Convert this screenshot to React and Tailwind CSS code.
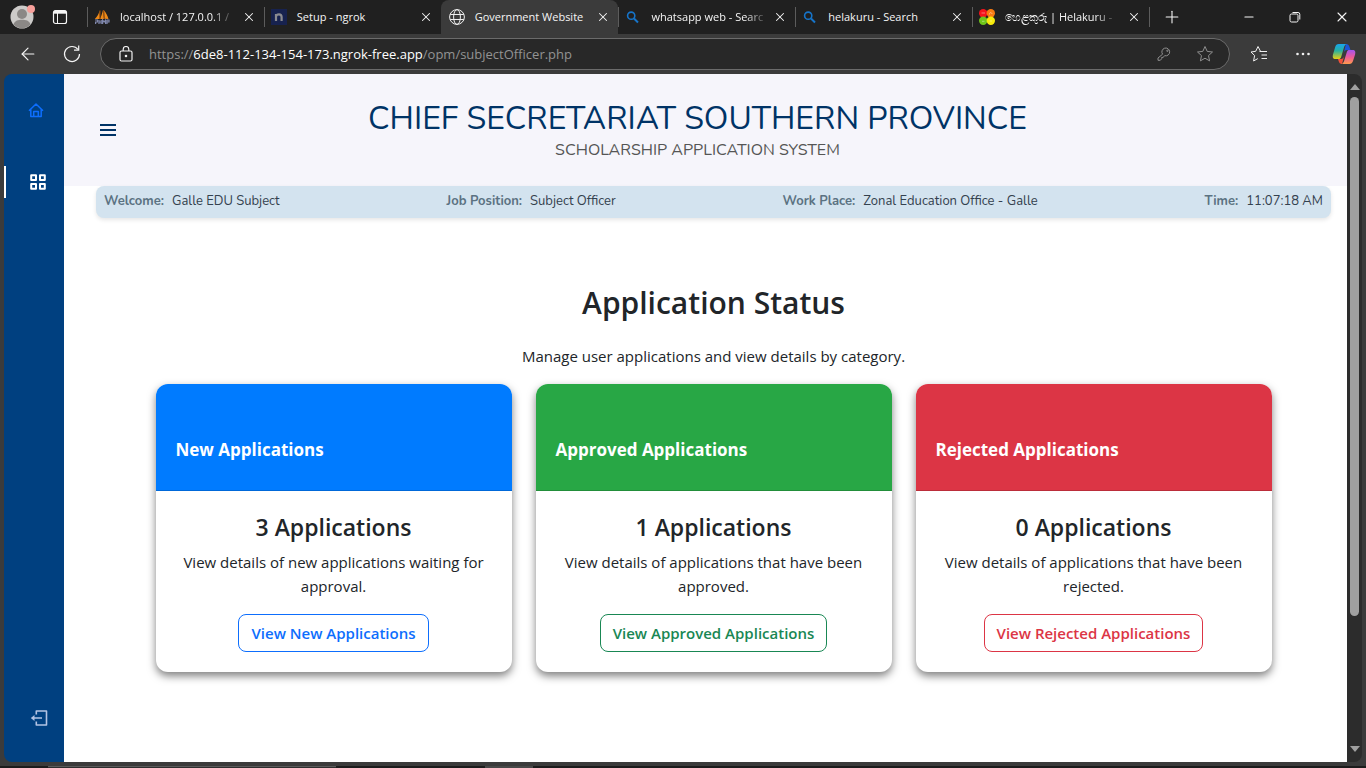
import React from "react";
import { X, Plus, Minus, ArrowLeft } from "lucide-react";

function MastIcon() {
  return (
    <svg viewBox="0 0 16 16" className="size-4" aria-hidden="true">
      <path d="M5.5 1.5C5 5 3 8 .8 10h5zM9 1c-.8 3.500-2 6.500-2.800 9H10zM10 1.500c2 2 3.800 5.500 4.500 8.500L10.500 9.800z" fill="#ee8a18" />
      <path d="M6 1.500 5.800 10M9.600 1l.6 9" stroke="#a4540b" strokeWidth="1" fill="none" />
      <path d="M1 11h2.500v2H1.600v2M5 11v4M5 13h2M7.200 11v4M8.600 15v-4l1.500 2 1.500-2v4M13 11v4M13 11h2v2h-2" stroke="#8088ad" strokeWidth="1.200" fill="none" />
    </svg>
  );
}

function NIcon() {
  return (
    <svg viewBox="0 0 16 16" className="size-4" aria-hidden="true">
      <rect width="16" height="16" fill="#17224f" />
      <path d="M5 12V5M5 7.500C5.300 5.800 6.500 5.300 8 5.300c2 0 2.600 1 2.600 2.700v4" stroke="#8b8b90" strokeWidth="2.200" fill="none" />
    </svg>
  );
}

function GlobeIcon() {
  return (
    <svg viewBox="0 0 16 16" className="size-4" fill="none" stroke="#f0f0f0" aria-hidden="true">
      <circle cx="8" cy="8" r="7.400" />
      <ellipse cx="8" cy="8" rx="3.400" ry="7.400" />
      <path d="M1.200 5.500h13.600M1.200 10.500h13.600" />
    </svg>
  );
}

function SearchTabIcon() {
  return (
    <svg viewBox="0 0 16 16" className="size-4" fill="none" stroke="#1674c9" aria-hidden="true">
      <circle cx="6.200" cy="6.700" r="3.600" strokeWidth="1.600" />
      <path d="m9 9.500 4 4" strokeWidth="2" />
    </svg>
  );
}

function HelakuruIcon() {
  return (
    <svg viewBox="0 0 16 16" className="size-4" aria-hidden="true">
      <circle cx="4.200" cy="4.200" r="4.200" fill="#f4141c" />
      <circle cx="11.800" cy="4.200" r="4.200" fill="#f97b12" />
      <circle cx="4.200" cy="11.800" r="4.200" fill="#6fc61a" />
      <circle cx="11.800" cy="11.800" r="4.200" fill="#f7ea0c" />
      <path d="M2.500 4h3.500M10.500 5.500c0-3 2.500-2 2.500-.5M3 12.300h2.500M10.500 12h2.500" stroke="#fff" strokeOpacity=".4" fill="none" />
    </svg>
  );
}

const tabs = [
  { title: "localhost / 127.0.0.1 /", icon: MastIcon, fade: true },
  { title: "Setup - ngrok", icon: NIcon },
  { title: "Government Website", icon: GlobeIcon, active: true },
  { title: "whatsapp web - Searc", icon: SearchTabIcon, fade: true },
  { title: "helakuru - Search", icon: SearchTabIcon },
  { title: "හෙළකුරු | Helakuru -", icon: HelakuruIcon, fade: true },
];

function Tab({ title, icon: Icon, active, fade }) {
  return (
    <div
      className={
        active
          ? "flex h-full min-w-0 max-w-[178px] flex-1 items-center rounded-t-lg bg-[#3b3b3b] px-2"
          : "flex h-5 min-w-0 max-w-[177px] flex-1 items-center border-l border-[#5c5c5c] pl-1.5 pr-2"
      }
    >
      <button type="button" role="tab" aria-selected={!!active} className="flex min-w-0 flex-1 items-center gap-2.5">
        <span className="shrink-0"><Icon /></span>
        <span
          className={
            "whitespace-nowrap text-left " +
            (fade ? "[mask-image:linear-gradient(to_right,#000_84%,rgba(0,0,0,0.25))]" : "")
          }
        >
          {title}
        </span>
      </button>
      <button type="button" aria-label={"Close " + title} className="ml-1 shrink-0">
        <X className="size-3.5" strokeWidth={1.8} />
      </button>
    </div>
  );
}

function TabStrip() {
  return (
    <div className="flex h-[34px] items-center bg-[#202020] text-[11px] text-[#f5f5f5]">
      <button type="button" aria-label="Profile" className="ml-2.5 shrink-0">
        <svg viewBox="0 0 26 26" className="size-[26px]" aria-hidden="true">
          <circle cx="12" cy="13" r="11.500" fill="#cdcbc9" />
          <circle cx="12" cy="10" r="5" fill="#8b8886" />
          <path d="M3.500 20.500C5 16.500 8 15.800 12 15.800s7 .7 8.500 4.700A11.500 11.500 0 0 1 3.500 20.500z" fill="#8b8886" />
          <circle cx="21" cy="5" r="4" fill="#f8a09b" />
        </svg>
      </button>
      <button type="button" aria-label="Workspaces" className="ml-4 mr-[19px] shrink-0">
        <svg viewBox="0 0 16 16" className="size-4" fill="none" stroke="#f5f5f5" aria-hidden="true">
          <rect x="1.500" y="1.500" width="13" height="13" rx="2" strokeWidth="1.200" />
          <path d="M2 3.200h12" strokeWidth="3" />
          <path d="M5.500 4v10" strokeWidth="1" />
        </svg>
      </button>
      <div role="tablist" className="flex h-full min-w-0 max-w-[1062px] flex-1 items-center">
        {tabs.map((tab) => (
          <Tab key={tab.title} {...tab} />
        ))}
      </div>
      <div className="flex h-5 items-center border-l border-[#5c5c5c] pl-3">
        <button type="button" aria-label="New tab"><Plus className="size-5" strokeWidth={1.3} /></button>
      </div>
      <div className="ml-auto flex shrink-0 items-center gap-8 pr-4">
        <button type="button" aria-label="Minimize"><Minus className="size-3.5" strokeWidth={1.8} /></button>
        <button type="button" aria-label="Restore">
          <svg viewBox="0 0 14 14" className="size-3.5" fill="none" stroke="#f5f5f5" aria-hidden="true">
            <rect x="2" y="4" width="8" height="8" rx="1.500" />
            <path d="M4.500 2.500H10a1.800 1.800 0 0 1 1.800 1.800V9.500" />
          </svg>
        </button>
        <button type="button" aria-label="Close window"><X className="size-4" strokeWidth={1.6} /></button>
      </div>
    </div>
  );
}

function CopilotIcon() {
  return (
    <svg viewBox="0 0 24 22" className="h-[22px] w-6" aria-hidden="true">
      <defs>
        <linearGradient id="cpA" x1="0" y1="0" x2="0" y2="1">
          <stop offset="0" stopColor="#18a5ee" />
          <stop offset=".45" stopColor="#28b1a0" />
          <stop offset="1" stopColor="#e9cf13" />
        </linearGradient>
        <linearGradient id="cpB" x1="0" y1="0" x2="0" y2="1">
          <stop offset="0" stopColor="#a354ef" />
          <stop offset=".5" stopColor="#ec5a9b" />
          <stop offset="1" stopColor="#ff9a4a" />
        </linearGradient>
      </defs>
      <path d="M14 1c2 0 2.800.8 3.400 2.800L18.500 7H15c-2 0-2.700 1-3.300 3z" fill="#1b55d8" />
      <path d="M6.800 1h8c-1.800.5-2.400 2-3 4L9.300 13.500C8.700 15.500 8 16 6.500 16H3.500C.8 16 .4 14 1 11.500L3.200 4C3.800 2 4.800 1 6.800 1z" fill="url(#cpA)" />
      <path d="M10 21c-2 0-2.800-1-3.400-3l-.6-2h3c2 0 2.700-1.500 3.300-3.500z" fill="#f0503a" />
      <path d="M17.500 7h3c2.800 0 3.200 2 2.600 4.500L21 18c-.7 2-1.800 3-3.700 3H9.500c1.800-.5 2.300-2 2.900-4l2.300-7.500C15.300 7.600 16 7 17.500 7z" fill="url(#cpB)" />
    </svg>
  );
}

function Toolbar() {
  return (
    <div className="flex h-10 items-center bg-[#3b3b3b] text-[#f5f5f5]">
      <button type="button" aria-label="Back" className="ml-[18px]"><ArrowLeft className="size-5" strokeWidth={1.4} /></button>
      <button type="button" aria-label="Refresh" className="ml-6">
        <svg viewBox="0 0 20 20" className="size-5" fill="none" stroke="#f5f5f5" strokeWidth="1.200" aria-hidden="true">
          <path d="M16 5.500A7.500 7.500 0 1 0 17.500 10" />
          <path d="M16.700 1.500v4.700H12" />
        </svg>
      </button>
      <div className="ml-[18px] flex h-8 min-w-0 flex-1 items-center rounded-full border border-[#6b6b6b] bg-[#282828] pl-[18px] pr-[15px]">
        <svg viewBox="0 0 14 16" className="h-4 w-3.5 shrink-0" fill="none" stroke="#f0f0f0" strokeWidth="1.200" aria-hidden="true">
          <rect x="1" y="5" width="12" height="10" rx="1.500" />
          <path d="M4.200 5V3.300a2.800 2.800 0 0 1 5.600 0V5" />
          <circle cx="7" cy="10" r=".7" fill="#f0f0f0" />
        </svg>
        <div
          role="textbox"
          aria-label="Address"
          tabIndex={0}
          className="ml-4 min-w-0 flex-1 overflow-hidden whitespace-nowrap text-[13px] leading-5 text-[#939393]"
        >
          https://<span className="text-white">6de8-112-134-154-173.ngrok-free.app</span>/opm/subjectOfficer.php
        </div>
        <button type="button" aria-label="Saved passwords">
          <svg viewBox="0 0 16 16" className="size-4" fill="none" stroke="#8f8f8f" strokeLinejoin="round" aria-hidden="true">
            <path d="M6.600 8.200A3.900 3.900 0 1 1 8.800 9.700L7 11.400H5.700v1.300l-1.400 1.600H2v-2.300z" />
            <circle cx="11.400" cy="4.800" r=".7" />
          </svg>
        </button>
        <button type="button" aria-label="Add to favorites" className="ml-6">
          <svg viewBox="0 0 18 18" className="size-[18px]" fill="none" stroke="#8f8f8f" strokeLinejoin="round" aria-hidden="true">
            <path d="m9 1.500 2.200 4.900 5.300.6-4 3.600 1.100 5.300L9 13.200l-4.600 2.700 1.100-5.300-4-3.600 5.300-.6z" />
          </svg>
        </button>
      </div>
      <button type="button" aria-label="Favorites" className="ml-5">
        <svg viewBox="0 0 18 18" className="size-[18px]" fill="none" stroke="#f0f0f0" strokeLinejoin="round" aria-hidden="true">
          <path d="M10.500 6.300 8 1.500 5.700 6.300l-4.700.7 3.600 3.500-1 5.500 4.200-2.400M9.500 6.500H17M11.500 10H17M11.500 13.500H17" />
        </svg>
      </button>
      <button type="button" aria-label="Settings and more" className="ml-[26px]">
        <svg viewBox="0 0 18 18" className="size-[18px]" fill="#f0f0f0" aria-hidden="true">
          <circle cx="3.500" cy="9" r="1.300" /><circle cx="9" cy="9" r="1.300" /><circle cx="14.500" cy="9" r="1.300" />
        </svg>
      </button>
      <button type="button" aria-label="Copilot" className="ml-5 mr-2.5 w-6 shrink-0"><CopilotIcon /></button>
    </div>
  );
}

function Sidebar() {
  return (
    <nav aria-label="Main" className="flex w-[60px] shrink-0 flex-col rounded-l-lg bg-[#004080] pb-8 pt-7">
      <a href="#home" aria-label="Home" className="flex h-4 items-center justify-center pl-1">
        <svg viewBox="0 0 16 16" className="size-4" fill="none" stroke="#0d6efd" strokeWidth="1.500" strokeLinejoin="round" aria-hidden="true">
          <path d="M1 8.800 8 2l7 6.800M2.800 7.500v7h10.400v-7M5.700 14.500V9.500h4.600v5" />
        </svg>
      </a>
      <a href="#dashboard" aria-label="Dashboard" className="mt-12 flex h-8 items-center justify-center border-l-2 border-white pl-1.5">
        <svg viewBox="0 0 16 16" className="size-4" fill="none" stroke="#fff" strokeWidth="2" strokeLinejoin="round" aria-hidden="true">
          <path d="M1.200 1.200h4.800v4.800H1.200zM10 1.200h4.800v4.800H10zM1.200 10h4.800v4.800H1.200zM10 10h4.800v4.800H10z" />
        </svg>
      </a>
      <a href="#logout" aria-label="Log out" className="mt-auto flex h-6 items-center justify-center pl-2.5">
        <svg viewBox="0 0 18 16" className="h-4 w-[18px]" fill="none" stroke="#b3c3e3" strokeWidth="1.600" strokeLinejoin="round" aria-hidden="true">
          <path d="M6.300 4.500V1H16.500v14H6.300v-3.500M2 8h10" />
          <path d="M4.500 5v6L.8 8z" fill="#b3c3e3" stroke="none" />
        </svg>
      </a>
    </nav>
  );
}

const info = [
  ["Welcome:", "Galle EDU Subject"],
  ["Job Position:", "Subject Officer"],
  ["Work Place:", "Zonal Education Office - Galle"],
  ["Time:", "11:07:18 AM"],
];

const cards = [
  {
    title: "New Applications",
    count: 3,
    text: "View details of new applications waiting for approval.",
    action: "View New Applications",
    header: "bg-[#007bff]",
    button: "border-[#0d6efd] text-[#0d6efd]",
  },
  {
    title: "Approved Applications",
    count: 1,
    text: "View details of applications that have been approved.",
    action: "View Approved Applications",
    header: "bg-[#28a745]",
    button: "border-[#198754] text-[#198754]",
  },
  {
    title: "Rejected Applications",
    count: 0,
    text: "View details of applications that have been rejected.",
    action: "View Rejected Applications",
    header: "bg-[#dc3545]",
    button: "border-[#dc3545] text-[#dc3545]",
  },
];

function StatusCard({ title, count, text, action, header, button }) {
  return (
    <article className="overflow-hidden rounded-xl bg-white shadow-[0_4px_8px_rgba(0,0,0,0.5)]">
      <header className={"border-b border-black/15 px-5 pb-[26px] pt-[52px] text-white " + header}>
        <h2 className="text-[17px] font-bold leading-7">{title}</h2>
      </header>
      <div className="px-5 pb-5 pt-5 text-center">
        <h3 className="text-[23px] font-semibold leading-8">{count} Applications</h3>
        <p className="mt-[7px] text-[15px] leading-6">{text}</p>
        <a href="#applications" className={"mt-4 inline-flex h-[38px] items-center rounded-lg border px-3 text-[15px] font-semibold " + button}>
          {action}
        </a>
      </div>
    </article>
  );
}

function Page() {
  return (
    <div className="min-w-0 flex-1 bg-white text-[#212529]">
      <header className="grid grid-cols-[52px_1fr_52px] items-center bg-[#f6f5fb] pb-[23px] pr-4 pt-[27px] text-center font-['Nunito','Lato',sans-serif]">
        <button type="button" aria-label="Toggle menu" className="flex items-center justify-end pb-1 text-[#003366]">
          <svg viewBox="0 0 16 14" className="h-3.5 w-4" stroke="currentColor" strokeWidth="2" aria-hidden="true">
            <path d="M0 2h16M0 7h16M0 12h16" />
          </svg>
        </button>
        <div>
          <h1 className="text-[32px] leading-9">
            <span className="text-[#003366]">CHIEF SECRETARIAT SOUTHERN PROVINCE</span>
          </h1>
          <p className="text-base leading-[26px] text-[#555]">SCHOLARSHIP APPLICATION SYSTEM</p>
        </div>
      </header>

      <dl className="ml-8 mr-4 flex h-8 justify-between rounded-lg bg-[#d3e3ef] px-2 pt-[5px] font-['Nunito','Lato',sans-serif] text-[13px] leading-5 shadow-[0_2px_4px_rgba(0,0,0,0.1)]">
        {info.map(([label, value]) => (
          <div key={label} className="flex gap-2">
            <dt className="font-bold text-[#5b7282]">{label}</dt>
            <dd className="text-[#33414e]">{value}</dd>
          </div>
        ))}
      </dl>

      <main className="ml-8 mr-4 pt-16">
        <div className="mx-auto max-w-[1140px] px-3">
          <h1 className="text-center text-[30px] font-semibold leading-[42px]">Application Status</h1>
          <p className="mt-5 text-center text-[15px] leading-6">Manage user applications and view details by category.</p>
          <div className="mt-4 grid grid-cols-3 gap-6">
            {cards.map((card) => (
              <StatusCard key={card.title} {...card} />
            ))}
          </div>
        </div>
      </main>
    </div>
  );
}

function ScrollBar() {
  return (
    <div aria-hidden="true" className="flex w-[15px] shrink-0 flex-col items-center rounded-r-lg bg-[#2c2c2c] pb-2.5 pt-2.5">
      <svg viewBox="0 0 10 6" className="h-1.5 w-2.5" fill="#a0a0a0"><path d="M5 0 10 6H0z" /></svg>
      <div className="mt-[7px] flex flex-1 flex-col">
        <div className="w-[9px] grow-[4] basis-0 rounded-full bg-[#a0a0a0]" />
        <div className="grow basis-0" />
      </div>
      <svg viewBox="0 0 10 6" className="h-1.5 w-2.5" fill="#a0a0a0"><path d="M0 0h10L5 6z" /></svg>
    </div>
  );
}

export default function App() {
  return (
    <div className="flex min-h-screen flex-col bg-[#3b3b3b] font-['Segoe_UI','Open_Sans','Noto_Sans',sans-serif]">
      <TabStrip />
      <Toolbar />
      <div className="flex flex-1 px-1">
        <Sidebar />
        <Page />
        <ScrollBar />
      </div>
      <div aria-hidden="true" className="mt-1 flex h-0.5 bg-[#1c1c1c]">
        <div className="ml-12 w-72 border-t border-[#5a5a5a] bg-[#2e2e2e]" />
        <div className="ml-[149px] w-12 bg-[#484848]" />
      </div>
    </div>
  );
}
